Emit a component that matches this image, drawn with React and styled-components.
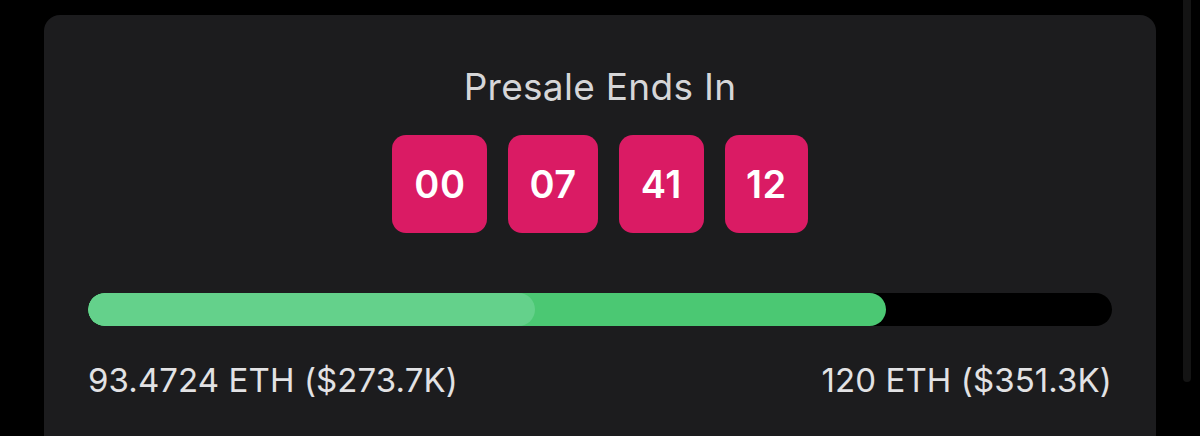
import React from 'react';
import styled, { createGlobalStyle } from 'styled-components';

const GlobalStyle = createGlobalStyle`
  html, body {
    margin: 0;
    padding: 0;
    background: #000;
    overflow: hidden;
  }
  body {
    font-family: Inter, "Noto Sans", "Liberation Sans", sans-serif;
  }
`;

const PAGE = styled.div`
  display: flex;
  align-items: stretch;
  height: 436px;
  padding: 15px 0 0 44px;
  box-sizing: border-box;
  overflow: hidden;
`;

const CARD = styled.section`
  width: 1112px;
  box-sizing: border-box;
  padding: 50px 44px 0;
  background: #1c1c1e;
  border-radius: 16px 16px 0 0;
  display: flex;
  flex-direction: column;
  align-items: center;
`;

const RAIL = styled.div`
  align-self: flex-start;
  width: 8px;
  height: 382px;
  margin: -15px 0 0 27px;
  background: #141414;
  border-radius: 0 0 4px 4px;
`;

const TITLE = styled.h2`
  margin: 0;
  font-size: 37px;
  line-height: 44px;
  font-weight: 400;
  color: #d6d6d8;
  letter-spacing: 0.3px;
`;

const TIMER = styled.div`
  display: flex;
  gap: 21px;
  margin-top: 26px;
`;

const DIGITS = styled.div`
  display: inline-flex;
  align-items: center;
  justify-content: center;
  height: 98px;
  padding: 0 ${(p) => p.$pad}px;
  background: #da1b64;
  border-radius: 14px;
  color: #fff;
  font-size: 38px;
  font-weight: 600;
  letter-spacing: 0.5px;
`;

const TRACK = styled.div`
  position: relative;
  align-self: stretch;
  height: 33px;
  margin-top: 60px;
  background: #000;
  border-radius: 17px;
  overflow: hidden;
`;

const FILL = styled.div`
  position: absolute;
  top: 0;
  left: 0;
  bottom: 0;
  background: ${(p) => p.$color};
  border-radius: 17px;
`;

const LABELS = styled.div`
  align-self: stretch;
  display: flex;
  justify-content: space-between;
  margin-top: 34px;
  font-size: 33px;
  line-height: 40px;
  letter-spacing: 0.1px;
  color: #e2e2e4;
`;

const raised = 93.4724;
const goal = 120;

const App = () => {
  const time = [
    { v: '00', pad: 22 },
    { v: '07', pad: 21 },
    { v: '41', pad: 22 },
    { v: '12', pad: 21 },
  ];
  const pct = (raised / goal) * 100;

  return (
    <>
      <GlobalStyle />
      <PAGE>
        <CARD>
          <TITLE>Presale Ends In</TITLE>
          <TIMER>
            {time.map((t) => (
              <DIGITS key={t.v} $pad={t.pad}>{t.v}</DIGITS>
            ))}
          </TIMER>
          <TRACK>
            <FILL $color="#4bc873" style={{ width: `${pct}%` }} />
            <FILL $color="#64d18b" style={{ width: '43.7%' }} />
          </TRACK>
          <LABELS>
            <span>93.4724 ETH ($273.7K)</span>
            <span>120 ETH ($351.3K)</span>
          </LABELS>
        </CARD>
        <RAIL />
      </PAGE>
    </>
  );
};

export default App;
